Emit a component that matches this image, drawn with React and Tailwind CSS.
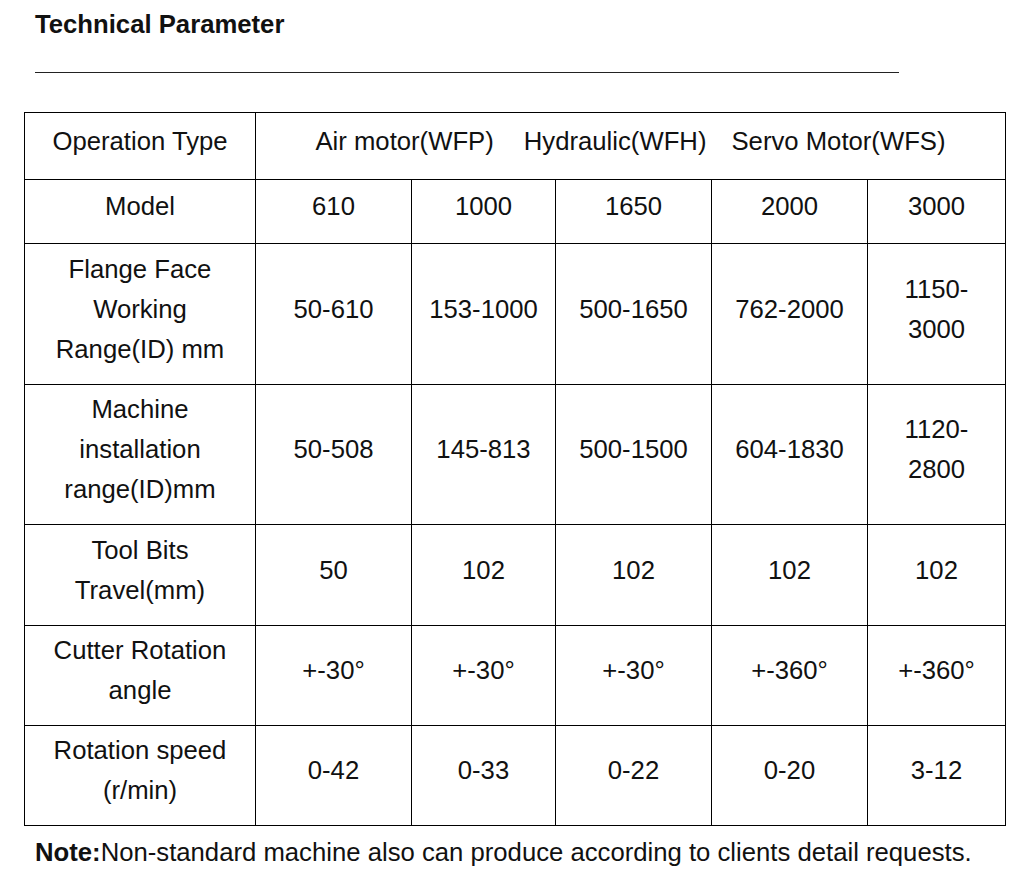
import React from "react";

const cell =
  "flex items-center justify-center text-center border-r border-b border-black pb-[11px] leading-[40px]";

const rows = [
  {
    label: ["Model"],
    values: [["610"], ["1000"], ["1650"], ["2000"], ["3000"]],
  },
  {
    label: ["Flange Face", "Working", "Range(ID) mm"],
    values: [["50-610"], ["153-1000"], ["500-1650"], ["762-2000"], ["1150-", "3000"]],
  },
  {
    label: ["Machine", "installation", "range(ID)mm"],
    values: [["50-508"], ["145-813"], ["500-1500"], ["604-1830"], ["1120-", "2800"]],
  },
  {
    label: ["Tool Bits", "Travel(mm)"],
    values: [["50"], ["102"], ["102"], ["102"], ["102"]],
  },
  {
    label: ["Cutter Rotation", "angle"],
    values: [["+-30°"], ["+-30°"], ["+-30°"], ["+-360°"], ["+-360°"]],
  },
  {
    label: ["Rotation speed", "(r/min)"],
    values: [["0-42"], ["0-33"], ["0-22"], ["0-20"], ["3-12"]],
  },
];

function Lines({ lines }) {
  return (
    <div>
      {lines.map((l, i) => (
        <div key={i} className="whitespace-nowrap">
          {l}
        </div>
      ))}
    </div>
  );
}

export default function App() {
  return (
    <div
      className="w-[1035px] h-[871px] bg-white text-[#111] text-[25.7px] overflow-hidden"
      style={{ fontFamily: '"Liberation Sans", Arial, sans-serif' }}
    >
      <h1 className="pt-[9px] pl-[35px] leading-[30px] font-bold text-[25.7px]">
        Technical Parameter
      </h1>
      <div className="mt-[33px] ml-[35px] w-[864px] h-px bg-[#222]" />

      <div className="mt-[39px] ml-[24px] w-[982px] grid grid-cols-[231px_156px_144px_156px_156px_138px] grid-rows-[67px_64px_141px_140px_101px_100px_100px] border-l border-t border-black">
        <div className={cell}>Operation Type</div>
        <div className={`${cell} col-span-5`}>
          <span className="whitespace-nowrap">Air motor(WFP)</span>
          <span className="whitespace-nowrap ml-[30px]">Hydraulic(WFH)</span>
          <span className="whitespace-nowrap ml-[25px]">Servo Motor(WFS)</span>
        </div>
        {rows.map((r, ri) => (
          <React.Fragment key={ri}>
            <div className={cell}>
              <Lines lines={r.label} />
            </div>
            {r.values.map((v, vi) => (
              <div key={vi} className={cell}>
                <Lines lines={v} />
              </div>
            ))}
          </React.Fragment>
        ))}
      </div>

      <p className="mt-[11px] pl-[35px] leading-[30px] whitespace-nowrap">
        <span className="font-bold">Note:</span>Non-standard machine also can produce according to clients detail requests.
      </p>
    </div>
  );
}
